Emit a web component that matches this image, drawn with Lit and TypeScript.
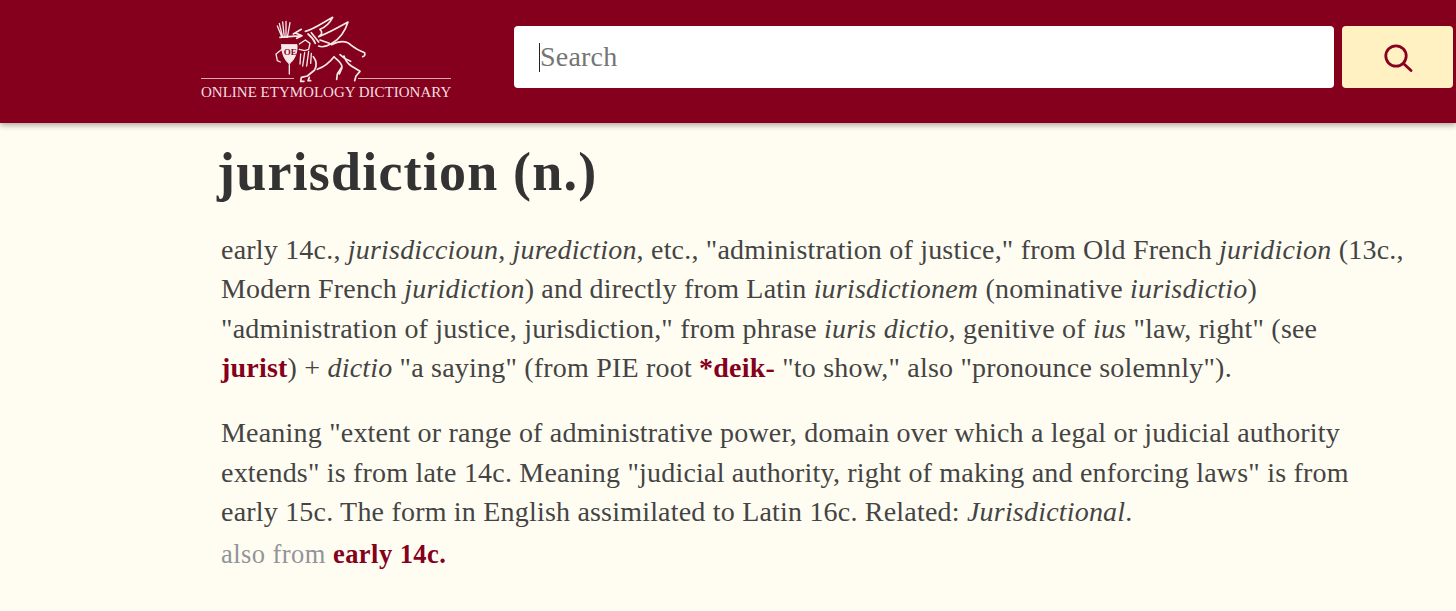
import {css, html, LitElement} from 'lit';
import {customElement} from 'lit/decorators.js';

const SERIF = css`'Liberation Serif', 'DejaVu Serif', serif`;

@customElement('app-root')
export class AppRoot extends LitElement {
  static styles = css`
    :host {
      display: block;
      min-height: 611px;
      background: #fffdf1;
      font-family: ${SERIF};
      overflow: hidden;
    }
    header {
      display: flex;
      align-items: flex-start;
      height: 123px;
      padding-left: 201px;
      background: #84001c;
      box-shadow: 0 2px 6px rgba(0, 0, 0, 0.35);
    }
    .logo {
      display: flex;
      flex-direction: column;
      width: 250px;
      margin-top: 12px;
      margin-right: 63px;
      color: #f3dfe0;
    }
    .logo svg {
      display: block;
      margin: 0 0 -6px 69px;
    }
    .logo-rule {
      display: flex;
      justify-content: space-between;
    }
    .logo-rule span {
      width: 93px;
      height: 1px;
      background: #d9aab2;
    }
    .logo-name {
      margin-top: 4px;
      font-size: 15px;
      line-height: 18px;
      text-align: center;
      white-space: nowrap;
    }
    .search {
      display: flex;
      gap: 8px;
      margin-top: 26px;
    }
    .field {
      display: flex;
      align-items: center;
      box-sizing: border-box;
      width: 820px;
      height: 62px;
      padding-left: 25px;
      background: #fff;
      border-radius: 4px;
      font-size: 28px;
      letter-spacing: 0.2px;
      color: #757575;
    }
    .caret {
      width: 1px;
      height: 29px;
      background: #222;
    }
    .btn {
      display: flex;
      align-items: center;
      justify-content: center;
      width: 111px;
      height: 62px;
      background: #fff1c1;
      border-radius: 4px;
    }
    main {
      padding: 20px 0 0 217px;
      color: #444;
    }
    h1 {
      margin: 0;
      font-size: 54px;
      line-height: 58px;
      font-weight: 700;
      letter-spacing: 1.2px;
      color: #333;
    }
    .entry {
      margin: 29px 0 0 4px;
    }
    p {
      margin: 0 0 25.5px;
      font-size: 28px;
      line-height: 39.4px;
      white-space: nowrap;
      letter-spacing: 0.2px;
    }
    a {
      color: #84001c;
      font-weight: 700;
      text-decoration: none;
    }
    .also {
      margin: -20px 0 0;
      font-size: 26.5px;
      line-height: 34px;
      letter-spacing: 0.45px;
      color: #939399;
    }
  `;

  private griffin() {
    return html`<svg width="100" height="72" viewBox="0 0 300 216" fill="none" stroke="#f7e9e9" stroke-width="5" stroke-linecap="round" stroke-linejoin="round">
      <!-- plumes -->
      <path d="M22 42l14 34M28 34l10 42M38 30l5 46M48 28v48M60 32l-8 44" stroke-width="4"/>
      <path d="M30 76l64-5M78 64l18 7-16 8M70 66l24-14" stroke-width="5"/>
      <!-- shield -->
      <path d="M35 98h46c2 25-8 45-23 58-14-12-24-32-23-58z" fill="#f7e9e9" stroke-width="3"/>
      <text x="41" y="130" font-family="Liberation Serif, serif" font-weight="700" font-size="27" fill="#84001c" stroke="none">OE</text>
      <path d="M36 112l-18 14 4 20 9 4M58 158v28" stroke-width="4"/>
      <!-- head and mane -->
      <path d="M88 96l18-12 14 10-4 18-12 4-16-4M92 126l-2 30M104 122l-6 40M116 118l-6 44M124 124l-2 30" stroke-width="4"/>
      <!-- wings -->
      <path d="M106 58c22-4 46-22 82-42-8 16-24 30-38 36 8 8 6 16-2 20M114 66c10 8 18 18 22 28M124 62l22 28" stroke-width="5"/>
      <path d="M146 74c26-10 56-26 88-44-8 26-24 50-48 64-14 8-28 14-40 8M150 84l28 10" stroke-width="5"/>
      <!-- body and tail -->
      <path d="M184 98c24-12 46-12 60 2 12 10 24 16 40 22 2 8-2 12-6 12" stroke-width="5"/>
      <path d="M130 134c8 10 12 24 4 40l-22 18-18 4-2 12h10M118 196l-4 10h8" stroke-width="5"/>
      <path d="M142 172c20-8 38-22 50-38 8 10 22 16 24 30l-14 22-2 16M216 168l-8 18" stroke-width="5"/>
      <path d="M222 132c4 14 10 22 22 30l26 16-12 14-4 14M210 128c10 10 20 16 32 20" stroke-width="5"/>
    </svg>`;
  }

  render() {
    return html`
      <header>
        <div class="logo">
          ${this.griffin()}
          <div class="logo-rule"><span></span><span></span></div>
          <div class="logo-name">ONLINE ETYMOLOGY DICTIONARY</div>
        </div>
        <div class="search">
          <div class="field"><span class="caret"></span>Search</div>
          <div class="btn">
            <svg width="30" height="30" viewBox="0 0 30 30" fill="none" stroke="#8a0020" stroke-width="2.8" stroke-linecap="round">
              <circle cx="13" cy="14" r="10.2"/>
              <path d="M21 22l7 6.5"/>
            </svg>
          </div>
        </div>
      </header>
      <main>
        <h1>jurisdiction (n.)</h1>
        <div class="entry">
          <p>early 14c., <i>jurisdiccioun</i>, <i>jurediction</i>, etc., "administration of justice," from Old French <i>juridicion</i> (13c.,<br />Modern French <i>juridiction</i>) and directly from Latin <i>iurisdictionem</i> (nominative <i>iurisdictio</i>)<br />"administration of justice, jurisdiction," from phrase <i>iuris dictio</i>, genitive of <i>ius</i> "law, right" (see<br /><a>jurist</a>) + <i>dictio</i> "a saying" (from PIE root <a>*deik-</a> "to show," also "pronounce solemnly").</p>
          <p>Meaning "extent or range of administrative power, domain over which a legal or judicial authority<br />extends" is from late 14c. Meaning "judicial authority, right of making and enforcing laws" is from<br />early 15c. The form in English assimilated to Latin 16c. Related: <i>Jurisdictional</i>.</p>
          <p class="also">also from <a>early 14c.</a></p>
        </div>
      </main>
    `;
  }
}
